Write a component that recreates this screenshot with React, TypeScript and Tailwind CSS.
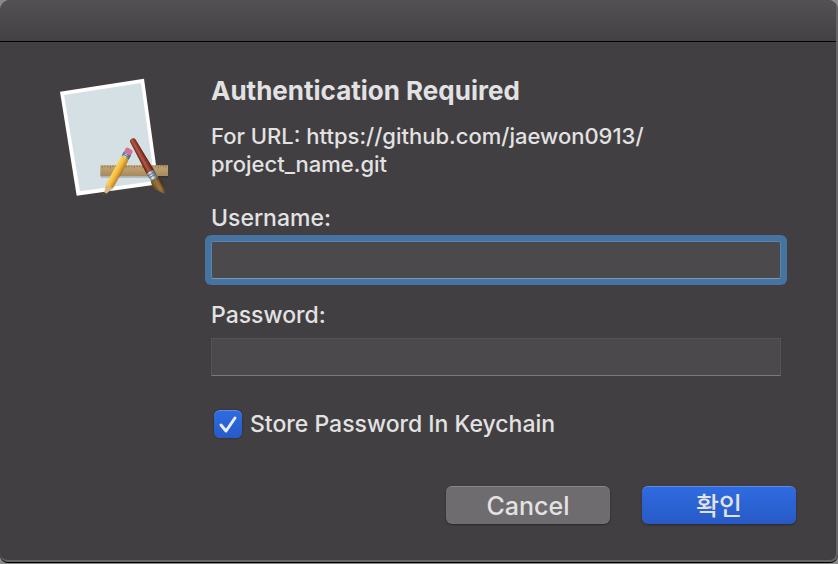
import React, { useState } from 'react';

const AppIcon: React.FC = () => (
  <svg viewBox="30 24 327 360" className="w-[109px] h-[120px] shrink-0" aria-hidden="true">
    <defs>
      <linearGradient id="ruler" x1="0" y1="0" x2="0" y2="1">
        <stop offset="0" stopColor="#c6a878" />
        <stop offset="1" stopColor="#a78a5c" />
      </linearGradient>
      <linearGradient id="pencil" x1="0" y1="0" x2="1" y2="0">
        <stop offset="0" stopColor="#fbd660" />
        <stop offset="0.5" stopColor="#f3bd40" />
        <stop offset="1" stopColor="#c08018" />
      </linearGradient>
      <linearGradient id="handle" x1="0" y1="0" x2="1" y2="0">
        <stop offset="0" stopColor="#5c1c14" />
        <stop offset="0.4" stopColor="#b35a45" />
        <stop offset="1" stopColor="#5a160f" />
      </linearGradient>
      <linearGradient id="metal" x1="0" y1="0" x2="1" y2="0">
        <stop offset="0" stopColor="#5f7485" />
        <stop offset="0.4" stopColor="#dbe6ee" />
        <stop offset="1" stopColor="#3d4f5e" />
      </linearGradient>
      <linearGradient id="bristle" x1="0" y1="0" x2="1" y2="0">
        <stop offset="0" stopColor="#6b4a22" />
        <stop offset="0.5" stopColor="#94703c" />
        <stop offset="1" stopColor="#3c2510" />
      </linearGradient>
    </defs>

    {/* sheet */}
    <path d="M30 65 282 26 326 343 80 377Z" fill="#fff" />
    <path d="M42 75 273 39 314 333 90 364Z" fill="#d5e0e4" />

    {/* ruler */}
    <path d="M152 318h202v5H152z" fill="#000" opacity="0.2" />
    <path d="M151 286h203v32H151z" fill="url(#ruler)" />
    <path
      d="M157 286v9M165 286v6M173 286v6M181 286v9M189 286v6M197 286v6M205 286v9M213 286v6M221 286v6M229 286v9M237 286v6M245 286v6M253 286v9M261 286v6M269 286v6M277 286v9M285 286v6M293 286v6M301 286v9M309 286v6M317 286v6M325 286v9M333 286v6M341 286v6M348 286v9"
      stroke="#77603a"
      strokeWidth="2"
    />

    {/* pencil */}
    <g transform="translate(238 240) rotate(29)">
      <path d="M-10 32h24v94L3 155-10 126z" fill="#000" opacity="0.18" />
      <path d="M-12 120-2 156h4l10-36z" fill="#dcb681" />
      <path d="M-4 147-2 158h4l2-11z" fill="#4a4238" />
      <path d="M-12 24h24v98l-6 5-6-5-6 5-6-5z" fill="url(#pencil)" />
      <path d="M-12 10h24v16h-24z" fill="url(#metal)" />
      <path d="M-12 15h24M-12 20h24" stroke="#4c6273" strokeWidth="2" />
      <rect x="-12" y="-4" width="24" height="17" rx="7" fill="#d2719b" />
    </g>

    {/* brush */}
    <g transform="translate(249 213) rotate(-29)">
      <path d="M-9 0c0-11 18-11 18 0l4 107h-25z" fill="url(#handle)" />
      <path d="M-12 105h25l-1 26h-23z" fill="url(#metal)" />
      <path d="M-12 113h25M-11 120h24" stroke="#475c6c" strokeWidth="2" />
      <path d="M-11 130h23c10 13 9 25-5 54-17-19-27-34-18-54z" fill="url(#bristle)" />
      <path d="M-6 137 0 168M2 136l1 35M8 138 6 168" stroke="#b58d50" strokeWidth="2" opacity="0.6" />
    </g>
  </svg>
);

const fieldClass =
  'block w-full h-[38px] px-2 mt-[7px] bg-[#4b494b] text-[#e3e2e3] border caret-transparent outline-none';

const App: React.FC = () => {
  const [username, setUsername] = useState('');
  const [password, setPassword] = useState('');
  const [store, setStore] = useState(true);

  return (
    <div className="min-h-screen flex flex-col bg-[#8b8a8b] font-['Inter','Noto_Sans_CJK_KR',sans-serif] font-medium text-[#e3e2e3]">
      <div className="flex-1 flex flex-col mb-px rounded-t-[10px] rounded-b-lg overflow-hidden border-b border-black bg-[#413f41]">
        <div className="flex-1 flex flex-col border-r-2 border-b-2 border-[#666466] rounded-b-lg">
          <header className="h-[42px] shrink-0 border-b border-black bg-linear-to-b from-[#535153] to-[#434143]" />

          <form className="flex-1 flex flex-col" onSubmit={(event) => event.preventDefault()}>
            <div className="flex gap-[42px] pl-[60px] pr-[55px] pt-9">
              <AppIcon />
              <div className="flex-1 min-w-0">
                <h1 className="text-[26px] leading-[34px] font-bold -mt-1">Authentication Required</h1>
                <p className="mt-3.5 text-[22px] leading-7 break-words">
                  For URL: https://github.com/jaewon0913/
                  <br />
                  project_name.git
                </p>

                <label htmlFor="username" className="block mt-6 text-[23px] leading-8">
                  Username:
                </label>
                <input
                  id="username"
                  type="text"
                  value={username}
                  onChange={(event) => setUsername(event.target.value)}
                  className={`${fieldClass} rounded-xs border-[#5585b3] border-b-[#7599bb] ring-6 ring-[#46739f]`}
                />

                <label htmlFor="password" className="block mt-5 text-[23px] leading-8">
                  Password:
                </label>
                <input
                  id="password"
                  type="password"
                  value={password}
                  onChange={(event) => setPassword(event.target.value)}
                  className={`${fieldClass} border-[#555355] border-b-[#7b797b]`}
                />

                <label className="flex w-fit items-center gap-2 mt-8 pl-[3px] text-[23px] leading-8">
                  <span className="relative flex">
                    <input
                      type="checkbox"
                      checked={store}
                      onChange={(event) => setStore(event.target.checked)}
                      className="peer appearance-none size-7 rounded-md bg-[#6f6d6f] checked:bg-linear-to-b checked:from-[#2f6be0] checked:to-[#275ac6] border-t border-[#5d8ce8] shadow-[0_0_2px_#222]"
                    />
                    <svg
                      viewBox="0 0 28 28"
                      className="absolute inset-0 size-7 pointer-events-none opacity-0 peer-checked:opacity-100"
                      fill="none"
                      stroke="#e6edfb"
                      strokeWidth="3"
                      strokeLinecap="round"
                      strokeLinejoin="round"
                    >
                      <path d="M7 15l5 6L21 8" />
                    </svg>
                  </span>
                  Store Password In Keychain
                </label>
              </div>
            </div>

            <div className="flex justify-end gap-8 mt-auto pt-10 pr-10 pb-9">
              <button
                type="button"
                className="w-[164px] h-[38px] rounded-md bg-[#6e6c6e] border-t border-[#8a888a] shadow-[0_1px_2px_#2a282a] text-[25px] leading-8"
              >
                Cancel
              </button>
              <button
                type="submit"
                className="w-[154px] h-[38px] rounded-md bg-linear-to-b from-[#2f6be0] to-[#275ac6] border-t border-[#5d8ce8] shadow-[0_1px_2px_#2a282a] text-[25px] leading-8"
              >
                확인
              </button>
            </div>
          </form>
        </div>
      </div>
    </div>
  );
};

export default App;
